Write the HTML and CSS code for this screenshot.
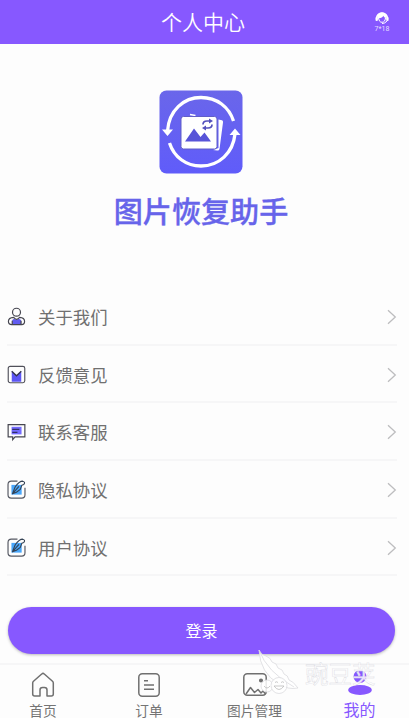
FILE: index.html
```html
<!DOCTYPE html>
<html lang="zh-CN">
<head>
<meta charset="utf-8">
<title>个人中心</title>
<link rel="stylesheet" href="styles.css">
</head>
<body>
<svg class="defs" aria-hidden="true">
  <symbol id="chevron" viewBox="0 0 10 16"><path d="M1 1.2 8.3 8 1 14.8" fill="none" stroke="#bdbdbf" stroke-width="1.3"/></symbol>
  <symbol id="edit" viewBox="0 0 19 19.5">
    <path d="M4.300 5h10.500v10H4.300z" fill="#48a6fa"/>
    <path d="M10.500 1.200H4.200Q.8 1.200 .8 4.600V15.200Q.8 18.600 4.200 18.600H14.800Q18.200 18.600 18.200 15.200V8" fill="none" stroke="#555862" stroke-width="1.200"/>
    <path d="M5.300 14.200 8.200 6.900Q12.500 1.100 15.900 1.200 19 2 17 4.600L15 5.300 13.400 9.600 9.400 12.600ZM5.300 14.200 12 6.500" fill="none" stroke="#344254" stroke-width="1.150" stroke-linejoin="round"/>
  </symbol>
</svg>
<div class="app">
  <header class="header">
    <h1>个人中心</h1>
    <div class="service">
      <svg viewBox="0 0 16 14" width="16" height="14">
        <path d="M2.500 7.500a5.500 5.500 0 0 1 11 0" fill="none" stroke="#fff" stroke-width="1.500"/>
        <ellipse cx="8" cy="5.500" rx="4.700" ry="4" fill="#fff"/>
        <path d="M4.700 7Q8.500 7 9.300 4.700 10 6.500 11.500 6.800 11 11 8 11 5 11 4.700 7Z" fill="#8758ff"/>
        <path d="M4.700 7Q5 11.300 8 11.300T11.500 6.800" fill="none" stroke="#fff"/>
        <rect x="1.500" y="6" width="2.400" height="4" rx="1" fill="#fff"/><rect x="12.200" y="6" width="2.400" height="4" rx="1" fill="#fff"/>
        <path d="M13 10Q11 12.500 8 12.600" fill="none" stroke="#fff"/>
      </svg>
      <span>7*18</span>
    </div>
  </header>
  <section class="brand">
    <svg viewBox="0 0 84 84" width="84" height="84">
      <defs><linearGradient id="bg" x2="0" y2="1"><stop stop-color="#6a66ea"/><stop offset="1" stop-color="#605cfa"/></linearGradient></defs>
      <rect x=".5" y=".5" width="83" height="83" rx="7" fill="url(#bg)"/>
      <g fill="none" stroke="#fff" stroke-width="3.300">
        <path d="M8.500 41C10 20 25 7.500 42 7.500 58 7.500 70 17 74.500 31"/>
        <path d="M10.500 53C15 67 27 76 42 76 60 76 74 63 76 44"/>
      </g>
      <path d="M3 39.500H14L8.500 46ZM70.500 45H81.500L76 38.500Z" fill="#fff"/>
      <path d="M59.500 29.500 63 30.200Q64.300 30.700 64 32.500L60.500 59Q60 61 58 60.500L54 60 59.500 58Z" fill="#fff"/>
      <path d="M31 24.500 36.500 25.500" stroke="#fff" stroke-width="1.500"/>
      <rect x="22" y="26.500" width="36" height="32.500" rx="2.500" fill="#fff" stroke="#615ec8"/>
      <path d="M26 51.500 35 38.500 41.500 47 45.500 42.500 52 51.500Z" fill="#5854d8"/>
      <g fill="none" stroke="#5451bd" stroke-width="1.700"><path d="M44 34.500Q44 31 48 31H51M53 34.500Q53 38 49 38H46"/></g>
      <path d="M50 28.500 54 31 50 33.500ZM47 35.500 43 38 47 40.500Z" fill="#5451bd"/>
    </svg>
    <h2>图片恢复助手</h2>
  </section>
  <main class="menu">
    <a class="row"><svg class="icon" viewBox="0 0 20 20"><path d="M5.500 18.500V14Q7 11.500 10 13.500 13 11.500 14.800 14V18.500Z" fill="#615cf0"/><g fill="none" stroke="#464650" stroke-width="1.250"><circle cx="10" cy="5.500" r="4.200"/><path d="M7 11Q10 15 13.300 11 18.500 11.500 18.500 15 18.500 18.500 15.500 18.500H5Q1.500 18.500 1.500 15 1.500 11.500 7 11ZM5.500 14.500V18M14.800 14.500V18"/></g></svg><span>关于我们</span><svg class="arrow"><use href="#chevron"/></svg></a>
    <a class="row"><svg class="icon" viewBox="0 0 20 20"><path d="M5 6.500 10 11 15 6.500V17.500H5Z" fill="#5c55f4"/><rect x="1.300" y="1.500" width="17.400" height="17.200" rx="2" fill="none" stroke="#50505a" stroke-width="1.200"/><path d="M5 6.500 10 11.300 15 6.500" fill="none" stroke="#34344a" stroke-width="1.400"/></svg><span>反馈意见</span><svg class="arrow"><use href="#chevron"/></svg></a>
    <a class="row"><svg class="icon" viewBox="0 0 20 20"><path d="M4.800 4H15.300V12H4.800Z" fill="#746bff"/><path d="M1.200 1.700H18.800V14.700H8.500L6 17.500V14.700H1.200Z" fill="none" stroke="#464650" stroke-width="1.250"/><path d="M5.500 6.700H13M5.500 9.800H11" stroke="#302f68" stroke-width="1.300"/></svg><span>联系客服</span><svg class="arrow"><use href="#chevron"/></svg></a>
    <a class="row"><svg class="icon"><use href="#edit"/></svg><span>隐私协议</span><svg class="arrow"><use href="#chevron"/></svg></a>
    <a class="row"><svg class="icon"><use href="#edit"/></svg><span>用户协议</span><svg class="arrow"><use href="#chevron"/></svg></a>
  </main>
  <button class="login">登录</button>
  <nav class="tabs">
    <a class="tab"><svg viewBox="0 0 24 26"><path d="M1.700 11Q1.700 10 2.500 9.200L10.700 2Q12 .8 13.300 2L21.500 9.200Q22.300 10 22.300 11V22Q22.300 24 20.300 24H16V18Q16 15.500 13.500 15.500H11.500Q9 15.500 9 18V24H3.700Q1.700 24 1.700 22Z"/></svg><span>首页</span></a>
    <a class="tab"><svg viewBox="0 0 24 26"><rect x="1.800" y="1.800" width="20.400" height="22.400" rx="3.500"/><path d="M7 8.800H11M7 13H17M7 17.300H17"/></svg><span>订单</span></a>
    <a class="tab"><svg viewBox="0 0 24 26"><rect x=".8" y="1.800" width="22.400" height="21.500" rx="3.500"/><path d="M3 22 7.500 15.500 11.500 20.500 15 17.500 18 21 20 19 22.500 22"/><circle cx="18" cy="8.500" r="1.300" fill="#707070"/></svg><span>图片管理</span></a>
    <a class="tab active"><svg viewBox="0 0 24 26"><circle cx="12" cy="5.500" r="6.500"/><ellipse cx="12" cy="19" rx="11.800" ry="4.900"/></svg><span>我的</span></a>
  </nav>
  <div class="watermark">
    <svg viewBox="0 0 44 46" width="44" height="46">
      <g fill="#fff" fill-opacity=".85" stroke="#dadade" stroke-width=".8">
        <path d="M2 2Q4 7 9 8 14 10 15 14 20 15 21 20 26 21 27 26 31 27 32 32 36 33 41 40 31 42 22 36 3 25 2 2Z"/>
        <path d="M2 2Q10 24 37 39" fill="none"/>
        <circle cx="10" cy="38" r="6"/><circle cx="22" cy="37.500" r="8"/>
        <path d="M17 38Q22 45 27 38ZM18 34.500Q19.500 33 21 34.500M24 34.500Q25.500 33 27 34.500M7 38Q10 42 13 38" fill="none" stroke="#bbb"/>
      </g>
    </svg>
    <span>豌豆荚</span>
  </div>
</div>
</body>
</html>
```
FILE: styles.css
```css
* { box-sizing: border-box; }
body { margin: 0; background: #fdfdfd; font-family: "Noto Sans CJK SC", sans-serif; }
h1, h2 { margin: 0; }
.defs { position: absolute; width: 0; height: 0; }
.app { position: relative; width: 409px; height: 718px; overflow: hidden; display: flex; flex-direction: column; }
.header { height: 44px; flex: none; background: #8758ff; color: #fff; display: grid; grid-template-columns: 51px 1fr 54px; align-items: center; }
.header h1 { grid-column: 2; text-align: center; font-size: 21px; font-weight: 350; line-height: 42px; padding-bottom: 2px; }
.service { display: flex; flex-direction: column; align-items: center; }
.service span { font: 7px/8px Roboto, sans-serif; color: #e5daff; }
.brand { height: 244px; flex: none; padding: 46px 7px 0 0; display: flex; flex-direction: column; align-items: center; }
.brand svg { flex: none; }
.brand h2 { margin-top: 16px; font-size: 29.1px; line-height: 40px; font-weight: 500; color: #6764ea; -webkit-text-stroke: .35px #6764ea; }
.menu { margin: 0 12px 0 7px; flex: none; }
.row { height: 57.7px; padding-top: 2px; border-bottom: 2px solid #f6f6f7; display: flex; align-items: center; color: #707070; font-size: 17.4px; }
.icon { width: 19px; height: 19px; margin-right: 12px; }
.row span { flex: 1; line-height: 26px; }
.arrow { width: 10px; height: 16px; }
.login { width: 387px; height: 47px; margin: 31px 0 0 8px; padding: 0; flex: none; border: 0; border-radius: 24px; background: #8758ff; color: #fff; font: 400 16px/47px "Noto Sans CJK SC", sans-serif; box-shadow: 0 1px 3px #0004; }
.tabs { margin-top: 9px; border-top: 2px solid #f6f6f7; height: 54px; flex: none; display: grid; grid-template-columns: 86px 126px 85px 125px; width: 422px; }
.tab { display: flex; flex-direction: column; align-items: center; padding-top: 7px; color: #747474; font-size: 13.7px; line-height: 14px; white-space: nowrap; }
.tab svg { width: 24px; height: 26px; flex: none; fill: none; stroke: #707070; stroke-width: 1.5; stroke-linejoin: round; overflow: visible; }
.tab span { margin-top: 5px; }
.active { color: #8758ff; font-size: 16px; padding-top: 6px; }
.active svg { fill: #8758ff; stroke: none; }
.watermark { position: absolute; left: 257px; top: 648px; display: flex; }
.watermark span { margin: 12px 0 0 4px; font-size: 23.5px; line-height: 26px; font-weight: 400; color: #ffffffd9; -webkit-text-stroke: .4px #d9d9df; }
```
